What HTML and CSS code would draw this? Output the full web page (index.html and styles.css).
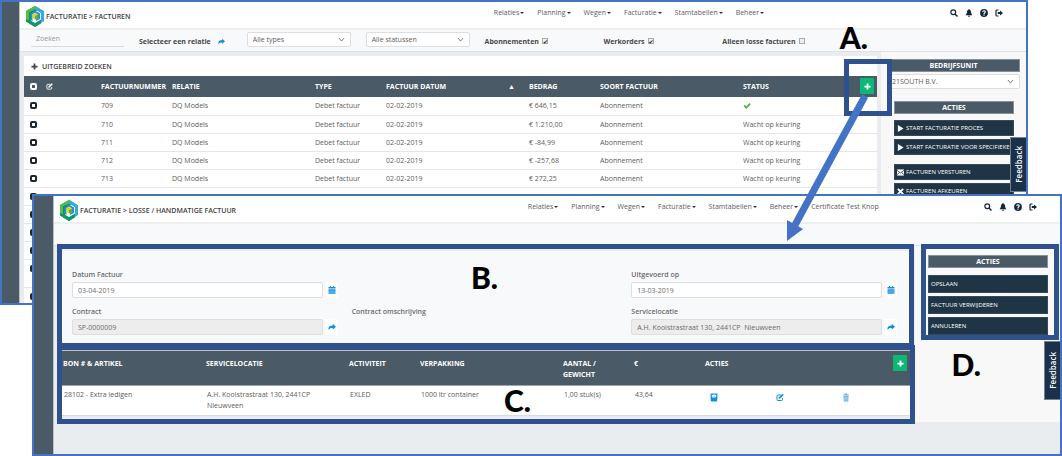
FILE: index.html
```html
<!DOCTYPE html>
<html lang="nl">
<head>
<meta charset="utf-8">
<title>Facturatie</title>
<link rel="stylesheet" href="styles.css">
</head>
<body>
<svg class="defs" aria-hidden="true">
  <symbol id="logo" viewBox="0 0 18 21">
    <path fill="#168a5b" d="M9 0 0 5v10.500L9 21l3-2-7-4V7.500l9-4.500z"/>
    <path fill="#35a9e1" d="m9 0 9 5v10l-3 2V7L9 3.500 6.500 5 4 3.500z"/>
    <path fill="#4fc04a" d="M0 5 9 0l2.500 1.500L3 6.500v8L0 13z"/>
    <path fill="#12996a" d="m9 21 6-3.500v-4L9 17l-6-3v3.500z"/>
    <path fill="#2b8fd0" d="m4.500 7.500 4.500-3 5 3v5.500l-4 2v-2.500l2-1V8.500L9 6.800l-2.500 1.500V15l-2-1z"/>
    <path fill="#d3dc22" d="m9 7 3 1.500V12l-3 1.500L6.500 12V8.500z"/>
    <path fill="#58b03c" d="m9 10 3-1.500V12l-3 1.500z"/>
  </symbol>
  <symbol id="search" viewBox="0 0 16 16"><circle cx="6.500" cy="6.500" r="4.800" fill="none" stroke="currentColor" stroke-width="2.400"/><path d="m10 10 5 5" stroke="currentColor" stroke-width="3"/></symbol>
  <symbol id="bell" viewBox="0 0 16 16"><path fill="currentColor" d="M8 0c1 0 1.300.7 1.300 1.500C12 2.300 12 5 12.300 7.500c.2 2 1.200 3.500 2.700 5H1c1.500-1.500 2.500-3 2.700-5C4 5 4 2.300 6.700 1.500 6.700.7 7 0 8 0zM6 13.500h4c0 3-4 3-4 0z"/></symbol>
  <symbol id="help" viewBox="0 0 16 16"><circle cx="8" cy="8" r="7.800" fill="currentColor"/><path d="M5.500 6c0-3.500 5-3.200 5-.4C10.500 7.500 8 7.500 8 9.800M8 11.200v2.200" fill="none" stroke="#fff" stroke-width="2.200"/></symbol>
  <symbol id="exit" viewBox="0 0 16 16"><path d="M7 2H4Q2 2 2 4v8q0 2 2 2h3" fill="none" stroke="currentColor" stroke-width="2.400"/><path fill="currentColor" d="M5.500 6H10V2.800L16 8l-6 5.200V10H5.500z"/></symbol>
  <symbol id="share" viewBox="0 0 16 16"><path fill="currentColor" d="M9.500 1.500 16 7.500l-6.500 6v-3.300C5 10 3 11 1.500 14-.5 8 3 4.800 9.500 4.800z"/></symbol>
  <symbol id="plus" viewBox="0 0 16 16"><path fill="currentColor" d="M6 1h4v5h5v4h-5v5H6v-5H1V6h5z"/></symbol>
  <symbol id="chevron" viewBox="0 0 16 16"><path d="m2 4.500 6 7 6-7" fill="none" stroke="currentColor" stroke-width="1.800"/></symbol>
  <symbol id="check" viewBox="0 0 16 16"><path fill="currentColor" d="m1 8 2.500-2.500L6.500 8.500 13 2l2.500 2.500-9 9.500z"/></symbol>
  <symbol id="edit" viewBox="0 0 16 16"><path d="M13 9v3q0 2-2 2H4q-2 0-2-2V5q0-2 2-2h6" fill="none" stroke="currentColor" stroke-width="2"/><path fill="currentColor" d="m13 .5 2.500 2.500-7 7-3.500 1L6 7.500z"/></symbol>
  <symbol id="calendar" viewBox="0 0 16 16"><path fill="currentColor" d="M1 2h3V0h2v2h4V0h2v2h3v3H1z"/><path fill="#4bade8" d="M1 6h14v10H1z"/><path d="M1 9.500h14" stroke="#2199dd"/></symbol>
  <symbol id="scale" viewBox="0 0 16 16"><path fill="currentColor" d="M2 0h12q1 0 1 2l-.5 12q0 2-2 2h-9q-2 0-2-2L1 2q0-2 1-2z"/><path fill="#fff" d="M3 3.500Q8 .5 13 3.500l-2 4.500H5z"/><path d="m8 7 1.500-3" stroke="currentColor"/></symbol>
  <symbol id="trash" viewBox="0 0 16 16"><path fill="currentColor" d="M2 2h3.500V0h5v2H14v2H2zm1 3h10l-.5 11h-9z"/><path d="M6 6.500v8M8 6.500v8M10 6.500v8" stroke="#fff" stroke-width=".7"/></symbol>
  <symbol id="play" viewBox="0 0 16 16"><path fill="currentColor" d="m2 0 13 8-13 8z"/></symbol>
  <symbol id="mail" viewBox="0 0 16 16"><path fill="currentColor" d="M0 1h16v14H0z"/><path d="m0 3 8 6 8-6M0 13l5.500-5M16 13l-5.500-5" fill="none" stroke="#1f3444" stroke-width="1.800"/></symbol>
  <symbol id="cross" viewBox="0 0 16 16"><path d="m2 2 12 12M14 2 2 14" stroke="currentColor" stroke-width="4.500"/></symbol>
</svg>

<main class="desktop">
  <section class="window window-list">
    <div class="rail"></div>
    <div class="app">
      <header class="topbar">
        <div class="brand"><svg class="logo"><use href="#logo"/></svg><h1 class="crumb">FACTURATIE &gt; FACTUREN</h1></div>
        <nav class="menu">
          <a class="drop" href="#">Relaties</a><a class="drop" href="#">Planning</a><a class="drop" href="#">Wegen</a><a class="drop" href="#">Facturatie</a><a class="drop" href="#">Stamtabellen</a><a class="drop" href="#">Beheer</a>
        </nav>
        <div class="tools">
          <button class="tool" aria-label="Zoeken"><svg><use href="#search"/></svg></button>
          <button class="tool" aria-label="Meldingen"><svg><use href="#bell"/></svg></button>
          <button class="tool" aria-label="Help"><svg><use href="#help"/></svg></button>
          <button class="tool" aria-label="Uitloggen"><svg><use href="#exit"/></svg></button>
        </div>
      </header>
      <div class="filters">
        <input class="query" type="text" placeholder="Zoeken" aria-label="Zoeken">
        <a class="pick" href="#">Selecteer een relatie <svg><use href="#share"/></svg></a>
        <div class="select"><select aria-label="Type"><option>Alle types</option></select><svg><use href="#chevron"/></svg></div>
        <div class="select"><select aria-label="Status"><option>Alle statussen</option></select><svg><use href="#chevron"/></svg></div>
        <label class="toggle">Abonnementen <input type="checkbox" checked></label>
        <label class="toggle">Werkorders <input type="checkbox" checked></label>
        <label class="toggle">Alleen losse facturen <input type="checkbox"></label>
      </div>
      <div class="body">
        <div class="panel">
          <button class="expand"><svg><use href="#plus"/></svg>UITGEBREID ZOEKEN</button>
          <table class="invoices">
            <colgroup><col class="c-pick"><col class="c-edit"><col class="c-narrow"><col class="c-wide"><col class="c-narrow"><col class="c-wide"><col class="c-narrow"><col class="c-wide"><col></colgroup>
            <thead><tr>
              <th><input class="box" type="checkbox" aria-label="Alles kiezen"></th><th><svg class="head-icon"><use href="#edit"/></svg></th><th>FACTUURNUMMER</th><th>RELATIE</th><th>TYPE</th><th><span class="sorted">FACTUUR DATUM<span>▲</span></span></th><th>BEDRAG</th><th>SOORT FACTUUR</th><th><span class="last-head">STATUS<button class="add" aria-label="Toevoegen"><svg><use href="#plus"/></svg></button></span></th>
            </tr></thead>
            <tbody>
              <tr><td><input class="box" type="checkbox" aria-label="709"></td><td></td><td>709</td><td>DQ Models</td><td>Debet factuur</td><td>02-02-2019</td><td>€ 646,15</td><td>Abonnement</td><td><svg class="ok"><use href="#check"/></svg></td></tr>
              <tr><td><input class="box" type="checkbox" aria-label="710"></td><td></td><td>710</td><td>DQ Models</td><td>Debet factuur</td><td>02-02-2019</td><td>€ 1.210,00</td><td>Abonnement</td><td>Wacht op keuring</td></tr>
              <tr><td><input class="box" type="checkbox" aria-label="711"></td><td></td><td>711</td><td>DQ Models</td><td>Debet factuur</td><td>02-02-2019</td><td>€ -84,99</td><td>Abonnement</td><td>Wacht op keuring</td></tr>
              <tr><td><input class="box" type="checkbox" aria-label="712"></td><td></td><td>712</td><td>DQ Models</td><td>Debet factuur</td><td>02-02-2019</td><td>€ -257,68</td><td>Abonnement</td><td>Wacht op keuring</td></tr>
              <tr><td><input class="box" type="checkbox" aria-label="713"></td><td></td><td>713</td><td>DQ Models</td><td>Debet factuur</td><td>02-02-2019</td><td>€ 272,25</td><td>Abonnement</td><td>Wacht op keuring</td></tr>
              <tr><td><input class="box" type="checkbox" aria-label="714"></td><td></td><td>714</td><td>DQ Models</td><td>Debet factuur</td><td>02-02-2019</td><td>€ -237,16</td><td>Abonnement</td><td>Wacht op keuring</td></tr>
              <tr><td><input class="box" type="checkbox" aria-label="Factuur"></td><td colspan="8"></td></tr>
              <tr><td><input class="box" type="checkbox" aria-label="Factuur"></td><td colspan="8"></td></tr>
              <tr><td><input class="box" type="checkbox" aria-label="Factuur"></td><td colspan="8"></td></tr>
              <tr class="tall"><td><input class="box" type="checkbox" aria-label="Factuur"></td><td colspan="8"></td></tr>
              <tr><td><input class="box" type="checkbox" aria-label="Factuur"></td><td colspan="8"></td></tr>
            </tbody>
          </table>
        </div>
        <aside class="side">
          <h2 class="side-title wide">BEDRIJFSUNIT</h2>
          <div class="select unit"><select aria-label="Bedrijfsunit"><option>21SOUTH B.V.</option></select><svg><use href="#chevron"/></svg></div>
          <h2 class="side-title">ACTIES</h2>
          <div class="actions">
            <button class="action"><svg><use href="#play"/></svg>START FACTURATIE PROCES</button>
            <button class="action"><svg><use href="#play"/></svg>START FACTURATIE VOOR SPECIFIEKE R</button>
            <button class="action group"><svg><use href="#mail"/></svg>FACTUREN VERSTUREN</button>
            <button class="action"><svg><use href="#cross"/></svg>FACTUREN AFKEUREN</button>
          </div>
        </aside>
      </div>
    </div>
    <button class="feedback">Feedback</button>
  </section>

  <section class="window window-detail">
    <div class="rail"></div>
    <div class="app">
      <header class="topbar">
        <div class="brand"><svg class="logo"><use href="#logo"/></svg><h1 class="crumb">FACTURATIE &gt; LOSSE / HANDMATIGE FACTUUR</h1></div>
        <nav class="menu">
          <a class="drop" href="#">Relaties</a><a class="drop" href="#">Planning</a><a class="drop" href="#">Wegen</a><a class="drop" href="#">Facturatie</a><a class="drop" href="#">Stamtabellen</a><a class="drop" href="#">Beheer</a><a href="#">Certificate Test Knop</a>
        </nav>
        <div class="tools">
          <button class="tool" aria-label="Zoeken"><svg><use href="#search"/></svg></button>
          <button class="tool" aria-label="Meldingen"><svg><use href="#bell"/></svg></button>
          <button class="tool" aria-label="Help"><svg><use href="#help"/></svg></button>
          <button class="tool" aria-label="Uitloggen"><svg><use href="#exit"/></svg></button>
        </div>
      </header>
      <div class="filters"></div>
      <div class="body">
        <div class="work">
          <form class="form">
            <div class="field"><label for="datum">Datum Factuur</label><div class="entry"><input id="datum" type="text" value="03-04-2019"><button type="button" class="mini" aria-label="Kalender"><svg><use href="#calendar"/></svg></button></div></div>
            <div></div>
            <div class="field"><label for="uitgevoerd">Uitgevoerd op</label><div class="entry"><input id="uitgevoerd" type="text" value="13-03-2019"><button type="button" class="mini" aria-label="Kalender"><svg><use href="#calendar"/></svg></button></div></div>
            <div class="field"><label for="contract">Contract</label><div class="entry"><input id="contract" type="text" value="SP-0000009" readonly><button type="button" class="mini" aria-label="Open contract"><svg><use href="#share"/></svg></button></div></div>
            <div class="field"><span>Contract omschrijving</span></div>
            <div class="field"><label for="locatie">Servicelocatie</label><div class="entry"><input id="locatie" type="text" value="A.H. Kooistrastraat 130, 2441CP&nbsp; Nieuwveen" readonly><button type="button" class="mini" aria-label="Open locatie"><svg><use href="#share"/></svg></button></div></div>
          </form>
          <table class="lines">
            <colgroup><col class="l-wide"><col class="l-wide"><col class="l-narrow"><col class="l-wide"><col class="l-narrow"><col class="l-narrow"><col></colgroup>
            <thead><tr><th>BON # &amp; ARTIKEL</th><th>SERVICELOCATIE</th><th>ACTIVITEIT</th><th>VERPAKKING</th><th>AANTAL /<br>GEWICHT</th><th>€</th><th><span class="last-head">ACTIES<button class="add" aria-label="Regel toevoegen"><svg><use href="#plus"/></svg></button></span></th></tr></thead>
            <tbody><tr><td>28102 - Extra ledigen</td><td>A.H. Kooistrastraat 130, 2441CP<br>Nieuwveen</td><td>EXLED</td><td>1000 ltr container</td><td>1,00 stuk(s)</td><td>43,64</td><td><div class="row-tools"><button aria-label="Wegen"><svg><use href="#scale"/></svg></button><button aria-label="Bewerken"><svg><use href="#edit"/></svg></button><button class="faded" aria-label="Verwijderen"><svg><use href="#trash"/></svg></button></div></td></tr></tbody>
          </table>
        </div>
        <aside class="side">
          <h2 class="side-title">ACTIES</h2>
          <div class="actions">
            <button class="action">OPSLAAN</button>
            <button class="action">FACTUUR VERWIJDEREN</button>
            <button class="action">ANNULEREN</button>
          </div>
        </aside>
      </div>
    </div>
    <button class="feedback">Feedback</button>
  </section>

  <div class="mark mark-a"></div>
  <div class="mark mark-b"></div>
  <div class="mark mark-c"></div>
  <div class="mark mark-d"></div>
  <svg class="arrow" viewBox="0 0 86 148" aria-hidden="true"><path d="M81 3 11 132" stroke="#4472c4" stroke-width="7"/><path fill="#4472c4" d="M3 127l16 9-16 12z"/></svg>
  <span class="tag tag-a">A.</span>
  <span class="tag tag-b">B.</span>
  <span class="tag tag-c">C.</span>
  <span class="tag tag-d">D.</span>
</main>
</body>
</html>
```
FILE: styles.css
```css
* { box-sizing: border-box; }
body { margin: 0; background: #fff; color: #5c5c5c; font: 7px/11px "Open Sans", "Noto Sans", sans-serif; }
button, input, select { font: inherit; color: inherit; margin: 0; }
button { border: 0; padding: 0; background: none; }
a { color: inherit; text-decoration: none; }
h1, h2 { margin: 0; font-size: inherit; }
svg { display: block; flex: none; }
.defs { position: absolute; width: 0; height: 0; }

.desktop { position: relative; min-height: 100vh; overflow: hidden; }
.window { position: absolute; display: flex; overflow: hidden; border: 2px solid #4472c4; background: #e9edf0; }
.window-list { inset: 0 34px 151px 0; }
.window-detail { inset: 194px 0 0 32px; }
.rail { flex: none; width: 18px; background: #4a5a66; border-right: 1px solid #b9c0c6; }
.window-detail .rail { width: 20px; }
.app { flex: 1; min-width: 0; display: flex; flex-direction: column; }

.topbar { flex: none; display: grid; grid-template-columns: 48% 1fr auto; height: 28px; padding-right: 23px; background: #fff; border-bottom: 2px solid #eeefef; }
.brand { display: flex; align-items: center; gap: 2px; padding: 3px 0 0 6px; }
.logo { width: 18px; height: 21px; }
.crumb { font-size: 7px; font-weight: 600; color: #3f3f3f; }
.menu { display: flex; gap: 13px; padding: 5px 0 0 2px; white-space: nowrap; }
.drop { display: flex; align-items: center; height: 11px; gap: 1px; }
.drop::after { content: ""; border: 2px solid transparent; border-top-color: #333; border-bottom: 0; }
.tools { display: flex; gap: 7px; padding-top: 7px; }
.tool, .tool svg { width: 8px; height: 8px; color: #12283a; }

.filters { flex: none; display: grid; grid-template-columns: 93fr 93fr 104fr 104fr 104fr 104fr 304fr; gap: 15px; align-items: center; height: 22px; padding: 0 0 2px 11px; background: #f8f9fb; border-bottom: 1px solid #dfe2e5; white-space: nowrap; }
.query { width: 100%; height: 14px; border: 0; border-bottom: 1px solid #d8dadc; background: none; padding: 0 5px 2px; }
.query::placeholder { color: #999; }
.pick, .toggle { display: flex; align-items: center; gap: 4px; padding-top: 3px; font-weight: 700; color: #484848; }
.pick { gap: 7px; }
.pick svg { width: 7px; height: 7px; color: #1590d8; }
.toggle { gap: 3px; }
.toggle input { display: grid; place-items: center; appearance: none; width: 6px; height: 6px; border: 1px solid #aaa; background: #eee; }
.toggle input:checked::before { content: "✔"; color: #222; font: 6px/6px "DejaVu Sans", sans-serif; }
.select { position: relative; }
.select select { display: block; appearance: none; width: 100%; height: 15px; border: 1px solid #dcdfe1; border-radius: 2px; background: #fff; padding: 0 5px; }
.select svg { position: absolute; right: 6px; top: 4px; width: 7px; height: 7px; pointer-events: none; }

.body { flex: 1; display: grid; grid-template-columns: minmax(0, 1fr) 145px; align-items: start; column-gap: 4px; }
.panel { margin: 4px 0 0 4px; background: #fff; }
.expand { display: flex; align-items: center; gap: 4px; height: 20px; padding-left: 7px; font-weight: 600; color: #444; }
.expand svg { width: 7px; height: 7px; }
table { width: 100%; table-layout: fixed; border-collapse: collapse; }
th, td { padding: 0; text-align: left; white-space: nowrap; }
th { color: #fff; background: #4a5a66; font-weight: 700; }
.invoices th { height: 21px; }
.invoices td { height: 18px; border-bottom: 1px solid #e6e6e6; }
.invoices .tall td { height: 28px; padding-bottom: 10px; }
.invoices th:first-child, .invoices td:first-child { padding-left: 6px; }
.c-pick { width: 22px; }
.c-edit { width: 55px; }
.c-narrow, .l-narrow { width: 71px; }
.c-wide, .l-wide { width: 143px; }
.box { display: block; appearance: none; width: 7px; height: 7px; border: 2px solid #1d2730; border-radius: 2px; background: #fff; }
th .box { border-color: #fff; background: none; }
.head-icon { width: 7px; height: 7px; }
.ok { width: 8px; height: 8px; color: #5aae4d; }
.sorted { display: flex; justify-content: space-between; padding-right: 14px; }
.last-head { display: flex; justify-content: space-between; padding-right: 3px; }
.add { display: grid; place-items: center; width: 14px; height: 16px; border-radius: 1px; background: #0cb875; color: #fff; margin: -3px 0; }
.add svg { width: 7px; height: 7px; }

.side { align-self: stretch; background: #f8f8f8; padding: 7px 12px 0 13px; }
.side-title { height: 13px; border: 1px solid #84909a; background: #4a5a66; color: #fff; text-align: center; font-weight: 700; }
.side-title.wide { margin: 0 -6px 2px -7px; }
.side .unit { margin: 0 -6px 12px -7px; }
.unit select { padding: 0 4px; }
.actions { display: grid; gap: 3px; padding-top: 6px; }
.action { display: flex; align-items: center; gap: 2px; height: 16px; padding-left: 2px; overflow: hidden; background: #1f3444; color: #fff; white-space: nowrap; border: 1px solid #35495a; font-size: 6px; }
.action svg { width: 7px; height: 7px; }
.action.group { margin-top: 6px; }
.feedback { position: absolute; right: 0; top: 135px; width: 16px; height: 55px; background: #1b3049; border: 1px solid #75808f; border-right: 0; color: #fff; writing-mode: sideways-lr; font: 600 8px "Open Sans", sans-serif; text-align: center; }

.window-detail .body { flex: none; column-gap: 5px; }
.window-detail .side { padding-top: 9px; }
.window-detail .actions { padding-top: 7px; }
.window-detail .action { height: 18px; }
.window-detail .feedback { top: 145px; height: 59px; }
.work { padding: 5px 0 6px 7px; }
.form { display: grid; grid-template-columns: repeat(3, minmax(0, 1fr)); gap: 8px 14px; margin: 0; padding: 18px 13px 15px 11px; background: #f8f9fb; }
.field { display: grid; gap: 2px; align-content: start; font-weight: 600; color: #6b6b6b; }
.entry { display: flex; gap: 3px; }
.entry input { flex: 1; min-width: 0; height: 16px; border: 1px solid #dcdfe1; border-radius: 2px; background: #fff; padding: 0 5px; font-weight: 400; }
.entry input[readonly] { background: #ededed; }
.mini { display: grid; place-items: center; width: 12px; height: 16px; background: #fff; color: #0d92dd; }
.mini svg { width: 8px; height: 8px; }
.lines { background: #fff; border-bottom: 1px solid #d8dcdf; }
.lines th { height: 35px; padding: 7px 0 0 2px; vertical-align: top; border-top: 1px solid #b9c0c6; border-bottom: 1px solid #9aa4ac; }
.lines td { height: 30px; padding: 3px 0 0 3px; vertical-align: top; }
.row-tools { display: flex; gap: 58px; padding: 4px 0 0 4px; }
.row-tools svg { width: 8px; height: 9px; color: #0d92dd; }
.row-tools .faded svg { color: #6fb2e2; }

.mark { position: absolute; border: 5px solid #2f528f; pointer-events: none; }
.mark-a { right: 170px; top: 59px; width: 48px; height: 57px; }
.mark-b { left: 57px; right: 148px; top: 244px; height: 104px; }
.mark-c { left: 57px; right: 147px; top: 345px; height: 79px; }
.mark-d { right: 3px; top: 244px; width: 138px; height: 96px; }
.arrow { position: absolute; right: 192px; top: 93px; width: 86px; height: 148px; pointer-events: none; }
.tag { position: absolute; color: #000; font: 900 30px/30px Lato, sans-serif; }
.tag-a { right: 194px; top: 22px; }
.tag-b { right: 564px; top: 262px; }
.tag-c { right: 531px; top: 385px; }
.tag-d { right: 81px; top: 349px; }
```
